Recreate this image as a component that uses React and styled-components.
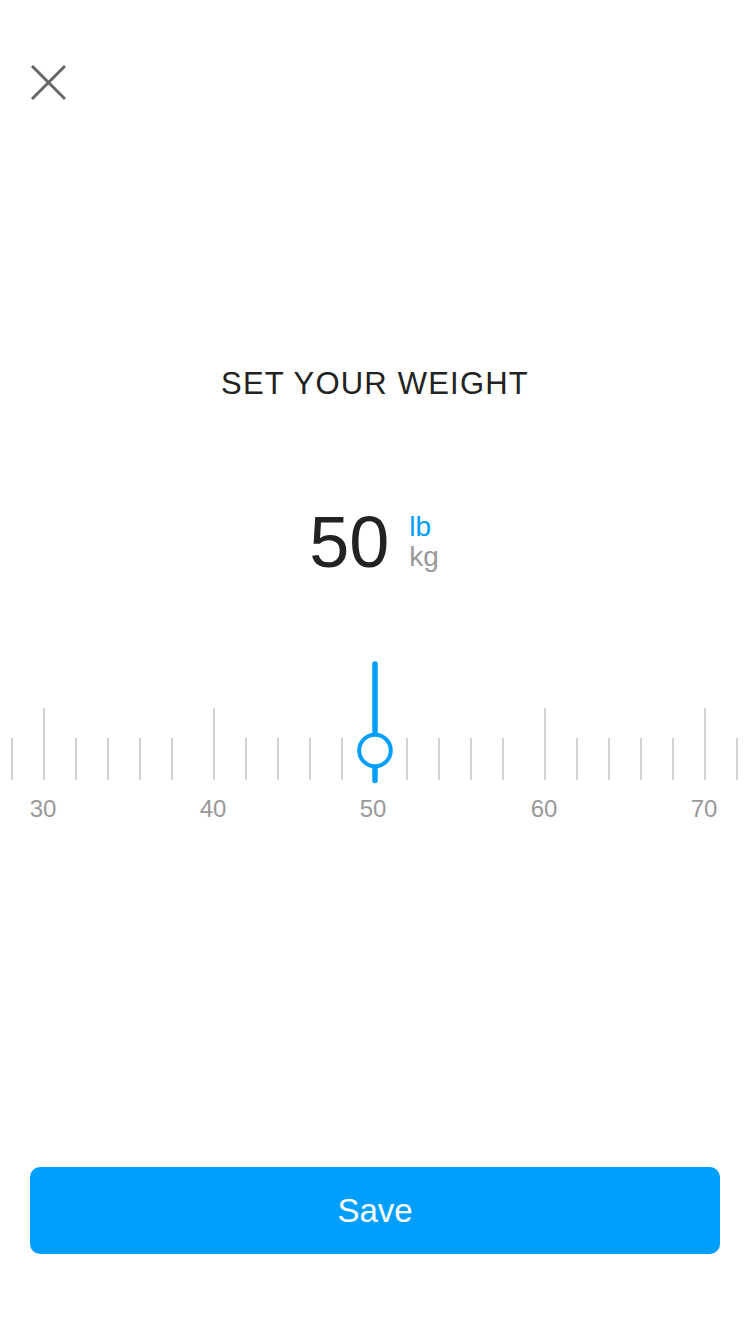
import React from 'react';
import styled, { createGlobalStyle } from 'styled-components';

const GlobalStyle = createGlobalStyle`
  html, body {
    margin: 0;
    padding: 0;
    background: #fff;
    font-family: "Liberation Sans", Arial, Helvetica, sans-serif;
  }
  * { box-sizing: border-box; }
`

const BLUE = '#009ffd';

const Page = styled.div`
  display: flex;
  flex-direction: column;
  height: 1334px;
  width: 750px;
  overflow: hidden;
`

const CloseButton = styled.button`
  width: 36px;
  height: 36px;
  margin: 65px 0 0 30px;
  padding: 0;
  border: none;
  background: none;
  cursor: pointer;
  display: flex;
`

const Title = styled.h1`
  margin: 267px 0 0;
  font-size: 31px;
  line-height: 1;
  font-weight: 400;
  letter-spacing: 1.2px;
  color: #222;
  text-align: center;
`

const ValueRow = styled.div`
  margin-top: 107px;
  display: flex;
  justify-content: center;
  align-items: flex-end;
  gap: 20px;
`

const Value = styled.div`
  font-size: 72px;
  line-height: 1;
  color: #222;
`

const Units = styled.div`
  display: flex;
  flex-direction: column;
  margin-bottom: 6px;
  margin-right: 2px;
`

const Unit = styled.span`
  font-size: 28px;
  line-height: 30px;
  color: ${p => (p.active ? BLUE : '#999')};
`

const Ruler = styled.div`
  position: relative;
  margin-top: 130px;
  display: flex;
  align-items: flex-start;
  padding-left: 11px;
`

const Slot = styled.div`
  width: 2px;
  flex: none;
  display: flex;
  flex-direction: column;
  align-items: center;
  margin-left: ${p => p.gap}px;
`

const TickArea = styled.div`
  height: 72px;
  display: flex;
  align-items: flex-end;
`

const Tick = styled.div`
  width: 2px;
  height: ${p => (p.major ? 72 : 42)}px;
  background: #d2d2d2;
`

const Label = styled.span`
  margin-top: 17px;
  margin-right: 2px;
  font-size: 24px;
  line-height: 1;
  color: #999;
  white-space: nowrap;
`

const Handle = styled.svg`
  position: absolute;
  left: calc(50% - 20.5px);
  top: -47px;
`

const SaveButton = styled.button`
  margin: auto 30px 80px;
  height: 87px;
  border: none;
  border-radius: 10px;
  background: ${BLUE};
  color: #fff;
  font-family: inherit;
  font-size: 33px;
  cursor: pointer;
`

// tick layout: gap is the spacing before each tick
const ticks = [
  { gap: 0 },
  { gap: 30, label: 30 },
  { gap: 30 }, { gap: 30 }, { gap: 30 }, { gap: 30 },
  { gap: 40, label: 40 },
  { gap: 30 }, { gap: 30 }, { gap: 30 }, { gap: 30 },
  { gap: 30, label: 50 },
  { gap: 31 }, { gap: 30 }, { gap: 30 }, { gap: 30 },
  { gap: 40, label: 60 },
  { gap: 30 }, { gap: 30 }, { gap: 30 }, { gap: 30 },
  { gap: 30, label: 70 },
  { gap: 30 },
];

function App() {
  return (
    <Page>
      <GlobalStyle />
      <CloseButton aria-label="close">
        <svg width="36" height="36" viewBox="0 0 36 36">
          <path d="M2 1 L35 34 M35 1 L2 34" stroke="#666" strokeWidth="3" fill="none" />
        </svg>
      </CloseButton>

      <Title>SET YOUR WEIGHT</Title>

      <ValueRow>
        <Value>50</Value>
        <Units>
          <Unit active>lb</Unit>
          <Unit>kg</Unit>
        </Units>
      </ValueRow>

      <Ruler>
        {ticks.map((t, i) => (
          <Slot key={i} gap={t.gap}>
            <TickArea>
              <Tick major={t.label !== undefined} />
            </TickArea>
            {t.label !== undefined && <Label>{t.label}</Label>}
          </Slot>
        ))}
        <Handle width="40" height="124" viewBox="0 0 40 124">
          <line x1="20" y1="3" x2="20" y2="119.5" stroke={BLUE} strokeWidth="5.5" strokeLinecap="round" />
          <circle cx="20" cy="89.5" r="15.8" fill="#fff" stroke={BLUE} strokeWidth="4" />
        </Handle>
      </Ruler>

      <SaveButton>Save</SaveButton>
    </Page>
  );
}

export default App;
